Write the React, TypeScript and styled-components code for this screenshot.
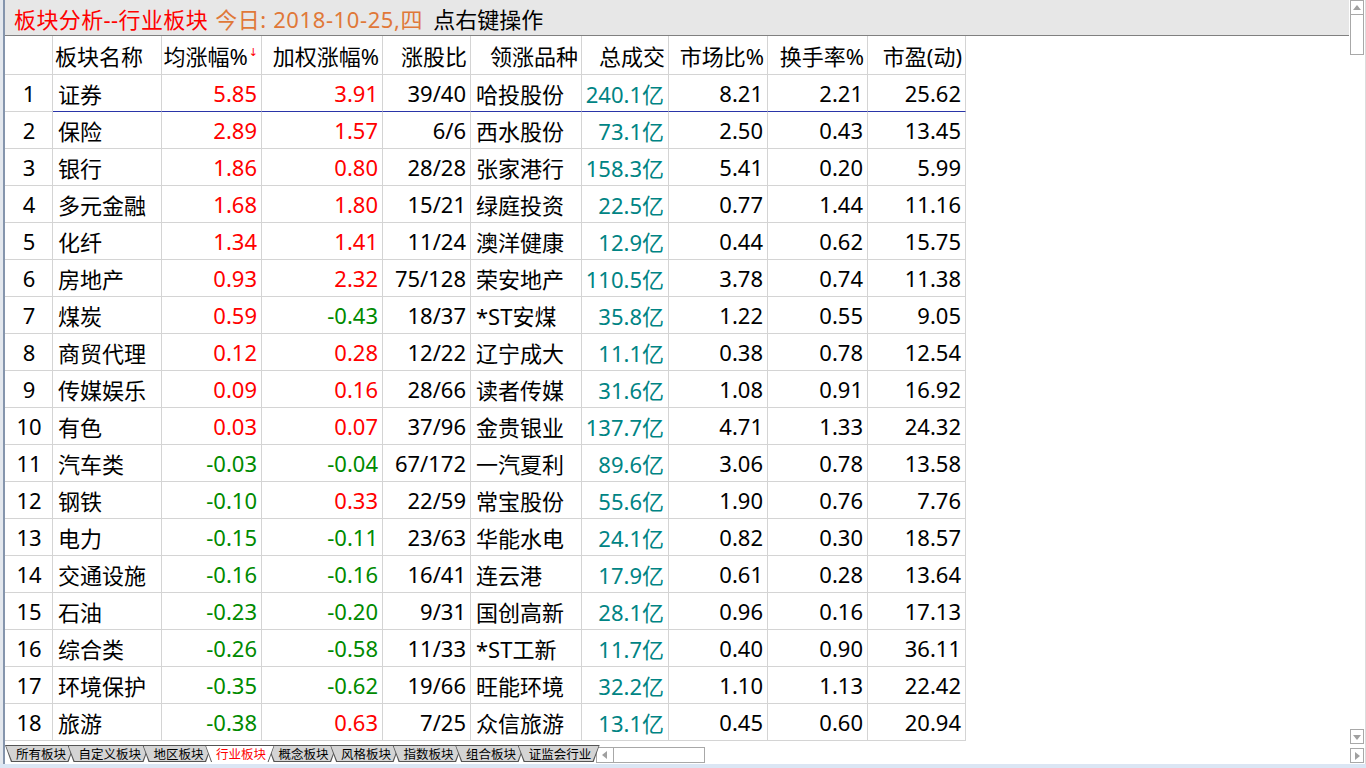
import * as React from "react";
import styled, { createGlobalStyle } from "styled-components";

type Sector = {
  name: string;
  avg: string;
  weighted: string;
  upRatio: string;
  leader: string;
  volume: string;
  market: string;
  turnover: string;
  pe: string;
};

const sectors: Sector[] = [
  { name: "证券", avg: "5.85", weighted: "3.91", upRatio: "39/40", leader: "哈投股份", volume: "240.1亿", market: "8.21", turnover: "2.21", pe: "25.62" },
  { name: "保险", avg: "2.89", weighted: "1.57", upRatio: "6/6", leader: "西水股份", volume: "73.1亿", market: "2.50", turnover: "0.43", pe: "13.45" },
  { name: "银行", avg: "1.86", weighted: "0.80", upRatio: "28/28", leader: "张家港行", volume: "158.3亿", market: "5.41", turnover: "0.20", pe: "5.99" },
  { name: "多元金融", avg: "1.68", weighted: "1.80", upRatio: "15/21", leader: "绿庭投资", volume: "22.5亿", market: "0.77", turnover: "1.44", pe: "11.16" },
  { name: "化纤", avg: "1.34", weighted: "1.41", upRatio: "11/24", leader: "澳洋健康", volume: "12.9亿", market: "0.44", turnover: "0.62", pe: "15.75" },
  { name: "房地产", avg: "0.93", weighted: "2.32", upRatio: "75/128", leader: "荣安地产", volume: "110.5亿", market: "3.78", turnover: "0.74", pe: "11.38" },
  { name: "煤炭", avg: "0.59", weighted: "-0.43", upRatio: "18/37", leader: "*ST安煤", volume: "35.8亿", market: "1.22", turnover: "0.55", pe: "9.05" },
  { name: "商贸代理", avg: "0.12", weighted: "0.28", upRatio: "12/22", leader: "辽宁成大", volume: "11.1亿", market: "0.38", turnover: "0.78", pe: "12.54" },
  { name: "传媒娱乐", avg: "0.09", weighted: "0.16", upRatio: "28/66", leader: "读者传媒", volume: "31.6亿", market: "1.08", turnover: "0.91", pe: "16.92" },
  { name: "有色", avg: "0.03", weighted: "0.07", upRatio: "37/96", leader: "金贵银业", volume: "137.7亿", market: "4.71", turnover: "1.33", pe: "24.32" },
  { name: "汽车类", avg: "-0.03", weighted: "-0.04", upRatio: "67/172", leader: "一汽夏利", volume: "89.6亿", market: "3.06", turnover: "0.78", pe: "13.58" },
  { name: "钢铁", avg: "-0.10", weighted: "0.33", upRatio: "22/59", leader: "常宝股份", volume: "55.6亿", market: "1.90", turnover: "0.76", pe: "7.76" },
  { name: "电力", avg: "-0.15", weighted: "-0.11", upRatio: "23/63", leader: "华能水电", volume: "24.1亿", market: "0.82", turnover: "0.30", pe: "18.57" },
  { name: "交通设施", avg: "-0.16", weighted: "-0.16", upRatio: "16/41", leader: "连云港", volume: "17.9亿", market: "0.61", turnover: "0.28", pe: "13.64" },
  { name: "石油", avg: "-0.23", weighted: "-0.20", upRatio: "9/31", leader: "国创高新", volume: "28.1亿", market: "0.96", turnover: "0.16", pe: "17.13" },
  { name: "综合类", avg: "-0.26", weighted: "-0.58", upRatio: "11/33", leader: "*ST工新", volume: "11.7亿", market: "0.40", turnover: "0.90", pe: "36.11" },
  { name: "环境保护", avg: "-0.35", weighted: "-0.62", upRatio: "19/66", leader: "旺能环境", volume: "32.2亿", market: "1.10", turnover: "1.13", pe: "22.42" },
  { name: "旅游", avg: "-0.38", weighted: "0.63", upRatio: "7/25", leader: "众信旅游", volume: "13.1亿", market: "0.45", turnover: "0.60", pe: "20.94" },
];

const tabs = ["所有板块", "自定义板块", "地区板块", "行业板块", "概念板块", "风格板块", "指数板块", "组合板块", "证监会行业"];
const ACTIVE_TAB = "行业板块";

const COLUMNS = "48px 109px 100px 121px 88px 111px 87px 99px 100px 98px";
const RED = "#ff0000";
const GREEN = "#008a00";
const TEAL = "#008484";

const changeColor = (v: string) => (v.startsWith("-") ? GREEN : RED);

const GlobalStyle = createGlobalStyle`
  html, body {
    margin: 0;
    padding: 0;
    width: 1366px;
    height: 768px;
    overflow: hidden;
    background: #fff;
  }
  body {
    font-family: "Noto Sans", "Noto Sans CJK SC", sans-serif;
  }
`;

type Dir = "up" | "down" | "left" | "right";

const triangle: Record<Dir, string> = {
  up: "0,6 8,6 4,1",
  down: "0,2 8,2 4,7",
  left: "6,0 6,8 1,4",
  right: "2,0 2,8 7,4",
};

const Arrow = ({ dir }: { dir: Dir }) => (
  <svg width="8" height="8" viewBox="0 0 8 8">
    <polygon points={triangle[dir]} fill="#a0a0a0" />
  </svg>
);

export default function App() {
  return (
    <>
      <GlobalStyle />
      <Screen>
        <Window>
          <LeftEdge />
          <Main>
            <TitleBar>
              <TitleRed>板块分析--行业板块</TitleRed>
              <TitleDate>今日: 2018-10-25,四</TitleDate>
              <TitleHint>点右键操作</TitleHint>
            </TitleBar>

            <Grid>
              <HeaderRow>
                <HeadCell $align="center" />
                <HeadCell $align="left">板块名称</HeadCell>
                <HeadCell $align="right">
                  均涨幅%<SortMark>↓</SortMark>
                </HeadCell>
                <HeadCell $align="right">加权涨幅%</HeadCell>
                <HeadCell $align="right">涨股比</HeadCell>
                <HeadCell $align="right">领涨品种</HeadCell>
                <HeadCell $align="right">总成交</HeadCell>
                <HeadCell $align="right">市场比%</HeadCell>
                <HeadCell $align="right">换手率%</HeadCell>
                <HeadCell $align="right">市盈(动)</HeadCell>
              </HeaderRow>

              {sectors.map((s, i) => {
                const sel = i === 0;
                return (
                  <DataRow key={s.name}>
                    <Cell $align="center">{i + 1}</Cell>
                    <Cell $align="left" $selected={sel}>{s.name}</Cell>
                    <Cell $align="right" $selected={sel} $color={changeColor(s.avg)}>{s.avg}</Cell>
                    <Cell $align="right" $selected={sel} $color={changeColor(s.weighted)}>{s.weighted}</Cell>
                    <Cell $align="right" $selected={sel}>{s.upRatio}</Cell>
                    <Cell $align="left" $selected={sel}>{s.leader}</Cell>
                    <Cell $align="right" $selected={sel} $color={TEAL}>{s.volume}</Cell>
                    <Cell $align="right" $selected={sel}>{s.market}</Cell>
                    <Cell $align="right" $selected={sel}>{s.turnover}</Cell>
                    <Cell $align="right" $selected={sel}>{s.pe}</Cell>
                  </DataRow>
                );
              })}
            </Grid>

            <TabBar>
              {tabs.map((t, i) => (
                <Tab key={t} $z={i + 1} $active={t === ACTIVE_TAB}>
                  {t}
                </Tab>
              ))}
              <HScroll>
                <HScrollButton>
                  <Arrow dir="left" />
                </HScrollButton>
                <HScrollThumb />
              </HScroll>
            </TabBar>
          </Main>

          <ScrollColumn>
            <ScrollButton>
              <Arrow dir="up" />
            </ScrollButton>
            <ScrollThumb />
            <ScrollTrack />
            <ScrollButton>
              <Arrow dir="down" />
            </ScrollButton>
            <CornerButton>
              <Arrow dir="right" />
            </CornerButton>
          </ScrollColumn>
          <RightEdge />
        </Window>
        <BottomStrip />
      </Screen>
    </>
  );
}

const Screen = styled.div`
  width: 1366px;
  height: 768px;
  display: flex;
  flex-direction: column;
  background: #fff;
`;

const Window = styled.div`
  display: flex;
  height: 764px;
`;

const LeftEdge = styled.div`
  width: 3px;
  background: #e4e8ee;
  border-right: 2px solid #8595ad;
`;

const RightEdge = styled.div`
  width: 1px;
  background: #dcdcdc;
`;

const BottomStrip = styled.div`
  height: 4px;
  background: #dbe6f4;
`;

const Main = styled.div`
  width: 1344px;
  display: flex;
  flex-direction: column;
`;

const TitleBar = styled.div`
  height: 35px;
  border-bottom: 1px solid #808080;
  background: #e7e7e7;
  display: flex;
  align-items: center;
  padding-left: 9px;
  font-size: 22px;
  white-space: nowrap;
`;

const TitleRed = styled.span`
  color: ${RED};
  letter-spacing: 0.4px;
`;

const TitleDate = styled.span`
  color: #e07838;
  margin-left: 7px;
  letter-spacing: 0.6px;
`;

const TitleHint = styled.span`
  color: #000;
  margin-left: 10px;
`;

const Grid = styled.div`
  display: flex;
  flex-direction: column;
  width: 961px;
`;

const HeaderRow = styled.div`
  display: grid;
  grid-template-columns: ${COLUMNS};
  height: 39px;
`;

const DataRow = styled.div`
  display: grid;
  grid-template-columns: ${COLUMNS};
  height: 37px;
`;

type Align = "left" | "right" | "center";

const justify: Record<Align, string> = {
  left: "flex-start",
  right: "flex-end",
  center: "center",
};

const HeadCell = styled.div<{ $align: Align }>`
  box-sizing: border-box;
  display: flex;
  align-items: center;
  justify-content: ${(p) => justify[p.$align]};
  padding: 0 3px 0 2px;
  border-right: 1px solid #d4d4d4;
  border-bottom: 1px solid #d4d4d4;
  font-size: 22px;
  color: #000;
  white-space: nowrap;
`;

const SortMark = styled.span`
  align-self: flex-start;
  margin-top: 11px;
  margin-left: 1px;
  font-family: "DejaVu Sans", sans-serif;
  font-size: 11px;
  line-height: 12px;
  color: ${RED};
`;

const Cell = styled.div<{ $align: Align; $color?: string; $selected?: boolean }>`
  box-sizing: border-box;
  display: flex;
  align-items: center;
  justify-content: ${(p) => justify[p.$align]};
  padding: 0 4px 0 5px;
  border-right: 1px solid #d4d4d4;
  border-bottom: 1px solid ${(p) => (p.$selected ? "#2a35a8" : "#d4d4d4")};
  font-size: 22px;
  color: ${(p) => p.$color || "#000"};
  white-space: nowrap;
`;

const TabBar = styled.div`
  height: 23px;
  box-sizing: border-box;
  padding-top: 4px;
  display: flex;
  align-items: flex-start;
`;

const Tab = styled.div<{ $z: number; $active?: boolean }>`
  position: relative;
  z-index: ${(p) => (p.$active ? 50 : p.$z)};
  height: 17px;
  padding: 0 8.5px 0 11px;
  margin-right: -7px;
  font-family: "Noto Sans CJK SC", sans-serif;
  font-size: 12.5px;
  line-height: 17px;
  color: ${(p) => (p.$active ? RED : "#000")};
  white-space: nowrap;

  &::before {
    content: "";
    position: absolute;
    inset: 0;
    z-index: -1;
    background: #555;
    clip-path: polygon(0 0, 100% 0, calc(100% - 6px) 100%, 6px 100%);
  }

  &::after {
    content: "";
    position: absolute;
    inset: ${(p) => (p.$active ? "1px 1px 0 1px" : "1px 1px 1px 1px")};
    z-index: -1;
    background: ${(p) => (p.$active ? "#fff" : "#d4d4d4")};
    clip-path: polygon(0 0, 100% 0, calc(100% - 6px) 100%, 6px 100%);
  }
`;

const HScroll = styled.div`
  display: flex;
  margin-left: 3px;
  margin-top: 2px;
  height: 16px;
`;

const HScrollButton = styled.div`
  box-sizing: border-box;
  width: 18px;
  height: 16px;
  border: 1px solid #a8a8a8;
  display: flex;
  align-items: center;
  justify-content: center;
`;

const HScrollThumb = styled.div`
  box-sizing: border-box;
  width: 91px;
  height: 16px;
  border: 1px solid #a8a8a8;
  border-left: none;
`;

const ScrollColumn = styled.div`
  width: 16px;
  box-sizing: border-box;
  padding: 0 1px 1px 1px;
  display: flex;
  flex-direction: column;
`;

const ScrollButton = styled.div`
  box-sizing: border-box;
  width: 14px;
  height: 15px;
  border: 1px solid #a8a8a8;
  display: flex;
  align-items: center;
  justify-content: center;
`;

const ScrollThumb = styled.div`
  box-sizing: border-box;
  width: 14px;
  height: 40px;
  border: 1px solid #a8a8a8;
  border-top: none;
`;

const ScrollTrack = styled.div`
  flex: 1;
`;

const CornerButton = styled(ScrollButton)`
  margin-top: 4px;
`;
